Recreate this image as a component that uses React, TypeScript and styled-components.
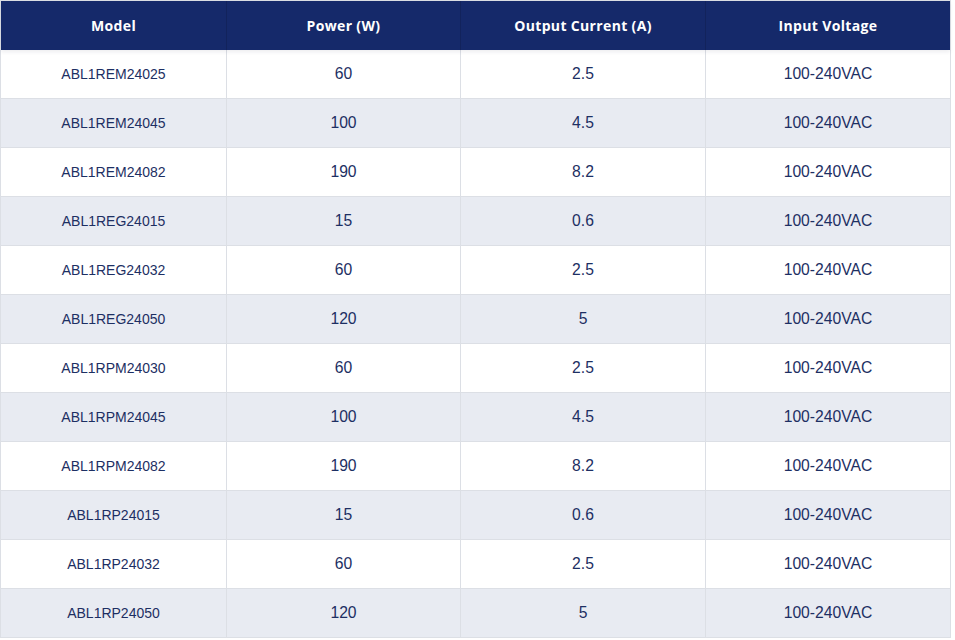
import * as React from "react"
import styled, { createGlobalStyle } from "styled-components"

const GlobalStyle = createGlobalStyle`
  html, body {
    margin: 0;
    padding: 0;
    background: #ffffff;
  }
`

const Wrapper = styled.div`
  width: 951px;
  box-sizing: border-box;
  border: 1px solid #dcdfe5;
  border-bottom: none;
  background: #ffffff;
`

const columns = "226px 234px 245px 244px"

const HeaderRow = styled.div`
  display: grid;
  grid-template-columns: ${columns};
  height: 49px;
  background: #15296a;
  box-shadow: 0 2px 4px rgba(20, 30, 60, 0.08);
  position: relative;
  z-index: 1;
`

const HeaderCell = styled.div`
  display: flex;
  align-items: center;
  justify-content: center;
  color: #ffffff;
  font-family: "Open Sans", Inter, sans-serif;
  font-weight: 700;
  font-size: 14px;
  letter-spacing: 0.35px;
  border-right: 1px solid #12235c;
  &:last-child {
    border-right: none;
  }
`

const Row = styled.div<{ $striped: boolean }>`
  display: grid;
  grid-template-columns: ${columns};
  height: 49px;
  box-sizing: border-box;
  border-bottom: 1px solid #dcdfe5;
  background: ${(p) => (p.$striped ? "#e8ebf2" : "#ffffff")};
`

const Cell = styled.div<{ $small?: boolean }>`
  display: flex;
  align-items: center;
  justify-content: center;
  color: #1d2f63;
  font-family: "Liberation Sans", Arial, sans-serif;
  font-size: ${(p) => (p.$small ? "14px" : "15.7px")};
  border-right: 1px solid #dcdfe5;
  &:last-child {
    border-right: none;
  }
`

const headers = ["Model", "Power (W)", "Output Current (A)", "Input Voltage"]

const rows: [string, string, string, string][] = [
  ["ABL1REM24025", "60", "2.5", "100-240VAC"],
  ["ABL1REM24045", "100", "4.5", "100-240VAC"],
  ["ABL1REM24082", "190", "8.2", "100-240VAC"],
  ["ABL1REG24015", "15", "0.6", "100-240VAC"],
  ["ABL1REG24032", "60", "2.5", "100-240VAC"],
  ["ABL1REG24050", "120", "5", "100-240VAC"],
  ["ABL1RPM24030", "60", "2.5", "100-240VAC"],
  ["ABL1RPM24045", "100", "4.5", "100-240VAC"],
  ["ABL1RPM24082", "190", "8.2", "100-240VAC"],
  ["ABL1RP24015", "15", "0.6", "100-240VAC"],
  ["ABL1RP24032", "60", "2.5", "100-240VAC"],
  ["ABL1RP24050", "120", "5", "100-240VAC"],
]

const App = (): React.ReactElement => {
  return (
    <>
      <GlobalStyle />
      <Wrapper>
        <HeaderRow>
          {headers.map((h) => (
            <HeaderCell key={h}>{h}</HeaderCell>
          ))}
        </HeaderRow>
        {rows.map((r, i) => (
          <Row key={r[0]} $striped={i % 2 === 1}>
            <Cell $small>{r[0]}</Cell>
            <Cell>{r[1]}</Cell>
            <Cell>{r[2]}</Cell>
            <Cell>{r[3]}</Cell>
          </Row>
        ))}
      </Wrapper>
    </>
  )
}

export default App
